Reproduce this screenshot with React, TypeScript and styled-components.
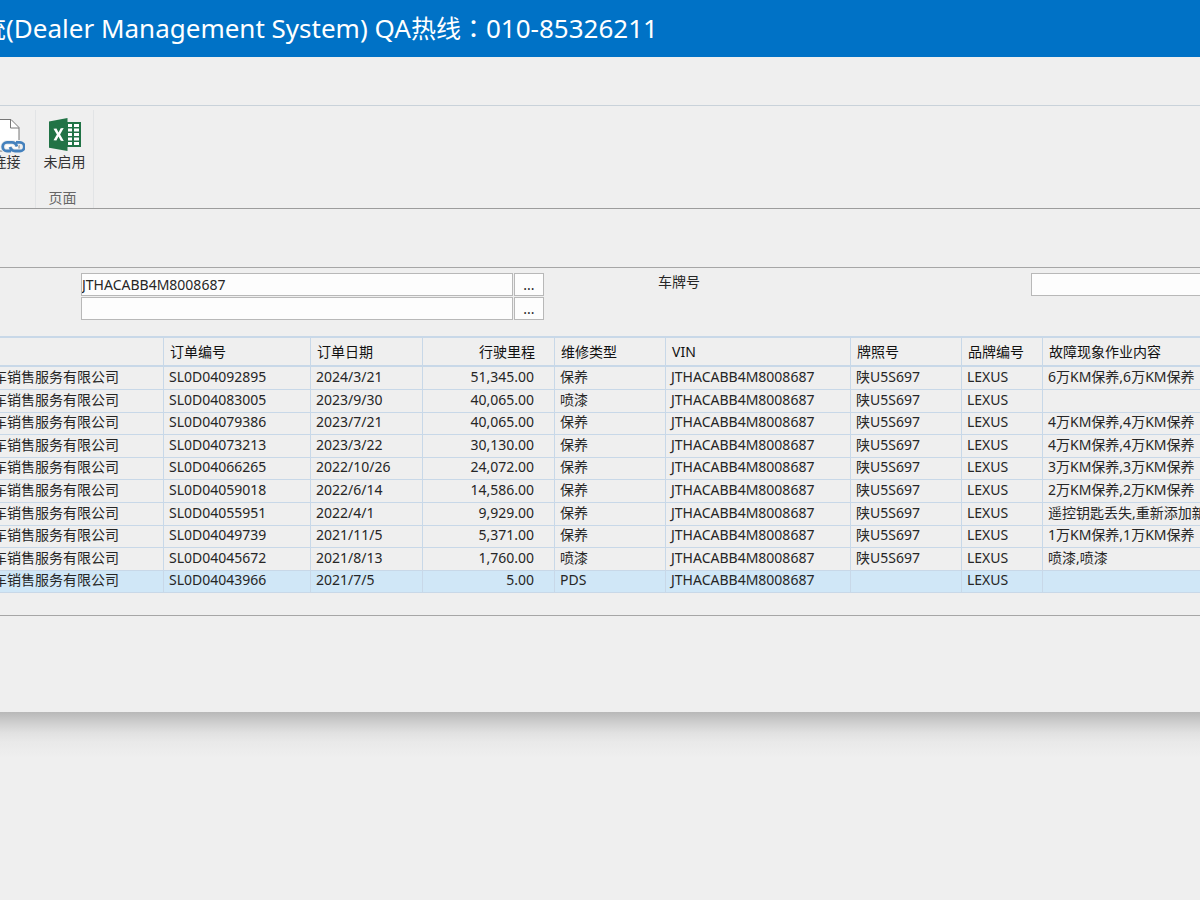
import React from "react";
import styled, { createGlobalStyle } from "styled-components";

const GlobalStyle = createGlobalStyle`
  * { box-sizing: border-box; }
  body {
    margin: 0;
    background: #efefef;
    color: #262626;
    font-family: "Noto Sans", "Noto Sans CJK SC", sans-serif;
    font-size: 14px;
    line-height: 20px;
    overflow-x: hidden;
  }
`;

const Page = styled.div`
  overflow: hidden;
`;

const TitleBar = styled.header`
  display: flex;
  align-items: center;
  height: 57px;
  padding-bottom: 2px;
  background: #0072c6;
  color: #fff;
`;

const Title = styled.h1`
  margin: 0 0 0 -19px;
  font-size: 26px;
  line-height: 36px;
  font-weight: 400;
  white-space: nowrap;
`;

const TitleHan = styled.span`
  font-size: 25px;
`;

const WideColon = styled(TitleHan)`
  font-family: "Noto Sans CJK TC", sans-serif;
`;

const TabStrip = styled.div`
  height: 49px;
  border-bottom: 1px solid #c9d2da;
`;

const Ribbon = styled.nav`
  display: flex;
  height: 103px;
  padding: 4px 0 0;
  border-bottom: 1px solid #9c9c9c;
`;

const RibbonGroup = styled.section<{ $width: number; $shift?: number }>`
  display: flex;
  flex-direction: column;
  align-items: center;
  justify-content: space-between;
  flex: none;
  width: ${(p) => p.$width}px;
  margin-left: ${(p) => p.$shift ?? 0}px;
  border-right: 1px solid #e2e4e6;
`;

const RibbonButton = styled.button`
  display: flex;
  flex-direction: column;
  align-items: center;
  padding: 7px 0 0;
  border: 0;
  background: none;
  color: #333;
  font: inherit;
  line-height: 18px;
  white-space: nowrap;

  svg { display: block; }
`;

const GroupName = styled.span`
  padding-right: 4px;
  color: #666;
`;

const FilterArea = styled.form`
  display: flex;
  align-items: flex-start;
  margin-top: 58px;
  padding: 5px 0 16px 81px;
  border-top: 1px solid #a6a6a6;
`;

const PairedFields = styled.div`
  display: flex;
  flex-direction: column;
  gap: 1px;
  width: 463px;
`;

const FieldRow = styled.div`
  display: grid;
  grid-template-columns: 1fr 30px;
  column-gap: 1px;
`;

const TextField = styled.input`
  width: 100%;
  height: 23px;
  padding: 0;
  border: 1px solid #b8b8b8;
  border-radius: 0;
  background: #fdfdfd;
  color: #262626;
  font: inherit;
`;

const LookupButton = styled.button`
  height: 23px;
  padding: 0;
  border: 1px solid #b8b8b8;
  background: #fdfdfd;
  color: #262626;
  font: inherit;
`;

const PlateLabel = styled.label`
  flex: none;
  width: 373px;
  margin-left: 114px;
  line-height: 18px;
`;

const PlateField = styled(TextField)`
  flex: 1;
  min-width: 0;
  margin-right: -8px;
`;

const OrderTable = styled.table`
  table-layout: fixed;
  width: calc(100% + 33px);
  margin: 0 -20px 0 -13px;
  border-collapse: collapse;
`;

const Column = styled.col<{ $width?: number }>`
  width: ${(p) => (p.$width ? `${p.$width}px` : "auto")};
`;

const HeadCell = styled.th<{ $right?: boolean }>`
  height: 29px;
  padding: 0 ${(p) => (p.$right ? 19 : 6)}px 0 6px;
  border: 1px solid #c8d8e8;
  border-width: 2px 1px;
  color: #111;
  font-weight: 400;
  text-align: ${(p) => (p.$right ? "right" : "left")};
  white-space: nowrap;
`;

const Cell = styled.td<{ $right?: boolean }>`
  padding: 0 ${(p) => (p.$right ? 20 : 5)}px 2px 5px;
  border: 1px solid #c8d8e8;
  line-height: 18px;
  text-align: ${(p) => (p.$right ? "right" : "left")};
  white-space: nowrap;
`;

const OrderRow = styled.tr<{ $selected: boolean }>`
  height: 23px;
  background: ${(p) => (p.$selected ? "#d0e7f7" : "transparent")};

  &:nth-child(5n + 3),
  &:nth-child(5n) {
    height: 22px;
  }
`;

const Footer = styled.footer`
  height: 97px;
  margin-top: 22px;
  border-top: 1px solid #a6a6a6;
`;

const Shadow = styled.div`
  height: 46px;
  background: linear-gradient(#b8b8b8, #c7c7c7 7px, #d3d3d3 13px, #e1e1e1 21px, #e9e9e9 30px, #efefef);
`;

const LinkIcon = () => (
  <svg width="36" height="36" viewBox="0 0 36 36" fill="none" aria-hidden="true">
    <path d="M3 2.500h19l8 8V34H3z" fill="#fff" stroke="#777" />
    <path d="M21.500 2.500v8.500h8.500" stroke="#777" />
    <path d="M22 34h-4a4.300 4.300 0 0 1 0-8.600h5q3.500 0 5 4M27 25.400h4a4.300 4.300 0 0 1 0 8.600h-5q-3.500 0-5-4" stroke="#efefef" strokeWidth="5" />
    <path d="M22 34h-4a4.300 4.300 0 0 1 0-8.600h5q3.500 0 5 4M27 25.400h4a4.300 4.300 0 0 1 0 8.600h-5q-3.500 0-5-4" stroke="#4481bd" strokeWidth="2.800" />
  </svg>
);

const ExcelIcon = () => (
  <svg width="36" height="36" viewBox="0 0 36 36" aria-hidden="true">
    <path d="M18 5h16v25H18z" fill="#217346" />
    <path d="M21 7h4v3h-4zM27 7h5v3h-5zM21 11.500h4v3h-4zM27 11.500h5v3h-5zM21 16h4v3h-4zM27 16h5v3h-5zM21 20.500h4v3h-4zM27 20.500h5v3h-5zM21 25h4v3h-4zM27 25h5v3h-5z" fill="#fff" />
    <path d="M2 4.500 20.500 1v33L2 30.800z" fill="#217346" />
    <path d="m6.500 11.700 3-.2 2 4 2.200-4.300 3-.2-3.600 6.400 3.700 6.500-3-.2-2.300-4.300-2.100 4-2.900-.2 3.400-5.800z" fill="#fff" />
  </svg>
);

type Order = [string, string, string, string, string, string];

const company = "车销售服务有限公司";
const vin = "JTHACABB4M8008687";

const orders: Order[] = [
  ["SL0D04092895", "2024/3/21", "51,345.00", "保养", "陕U5S697", "6万KM保养,6万KM保养"],
  ["SL0D04083005", "2023/9/30", "40,065.00", "喷漆", "陕U5S697", ""],
  ["SL0D04079386", "2023/7/21", "40,065.00", "保养", "陕U5S697", "4万KM保养,4万KM保养"],
  ["SL0D04073213", "2023/3/22", "30,130.00", "保养", "陕U5S697", "4万KM保养,4万KM保养"],
  ["SL0D04066265", "2022/10/26", "24,072.00", "保养", "陕U5S697", "3万KM保养,3万KM保养"],
  ["SL0D04059018", "2022/6/14", "14,586.00", "保养", "陕U5S697", "2万KM保养,2万KM保养"],
  ["SL0D04055951", "2022/4/1", "9,929.00", "保养", "陕U5S697", "遥控钥匙丢失,重新添加新"],
  ["SL0D04049739", "2021/11/5", "5,371.00", "保养", "陕U5S697", "1万KM保养,1万KM保养"],
  ["SL0D04045672", "2021/8/13", "1,760.00", "喷漆", "陕U5S697", "喷漆,喷漆"],
  ["SL0D04043966", "2021/7/5", "5.00", "PDS", "", ""],
];

export default function App() {
  return (
    <Page lang="zh-CN">
      <GlobalStyle />
      <TitleBar>
        <Title>
          <TitleHan>统</TitleHan>(Dealer Management System) QA<TitleHan>热线</TitleHan>
          <WideColon lang="zh-TW">：</WideColon>010-85326211
        </Title>
      </TitleBar>
      <TabStrip />
      <Ribbon>
        <RibbonGroup $width={58} $shift={-22}>
          <RibbonButton type="button">
            <LinkIcon />
            连接
          </RibbonButton>
        </RibbonGroup>
        <RibbonGroup $width={58}>
          <RibbonButton type="button">
            <ExcelIcon />
            未启用
          </RibbonButton>
          <GroupName>页面</GroupName>
        </RibbonGroup>
      </Ribbon>
      <FilterArea>
        <PairedFields>
          <FieldRow>
            <TextField aria-label="VIN" defaultValue={vin} />
            <LookupButton type="button">...</LookupButton>
          </FieldRow>
          <FieldRow>
            <TextField aria-label="查询条件" />
            <LookupButton type="button">...</LookupButton>
          </FieldRow>
        </PairedFields>
        <PlateLabel htmlFor="plate">车牌号</PlateLabel>
        <PlateField id="plate" />
      </FilterArea>
      <OrderTable>
        <colgroup>
          <Column $width={176} />
          <Column $width={147} />
          <Column $width={112} />
          <Column $width={132} />
          <Column $width={111} />
          <Column $width={185} />
          <Column $width={111} />
          <Column $width={81} />
          <Column />
        </colgroup>
        <thead>
          <tr>
            <HeadCell />
            <HeadCell>订单编号</HeadCell>
            <HeadCell>订单日期</HeadCell>
            <HeadCell $right>行驶里程</HeadCell>
            <HeadCell>维修类型</HeadCell>
            <HeadCell>VIN</HeadCell>
            <HeadCell>牌照号</HeadCell>
            <HeadCell>品牌编号</HeadCell>
            <HeadCell>故障现象作业内容</HeadCell>
          </tr>
        </thead>
        <tbody>
          {orders.map(([id, date, mileage, type, plate, work]) => (
            <OrderRow key={id} $selected={id === "SL0D04043966"}>
              <Cell>{company}</Cell>
              <Cell>{id}</Cell>
              <Cell>{date}</Cell>
              <Cell $right>{mileage}</Cell>
              <Cell>{type}</Cell>
              <Cell>{vin}</Cell>
              <Cell>{plate}</Cell>
              <Cell>LEXUS</Cell>
              <Cell>{work}</Cell>
            </OrderRow>
          ))}
        </tbody>
      </OrderTable>
      <Footer />
      <Shadow />
    </Page>
  );
}
